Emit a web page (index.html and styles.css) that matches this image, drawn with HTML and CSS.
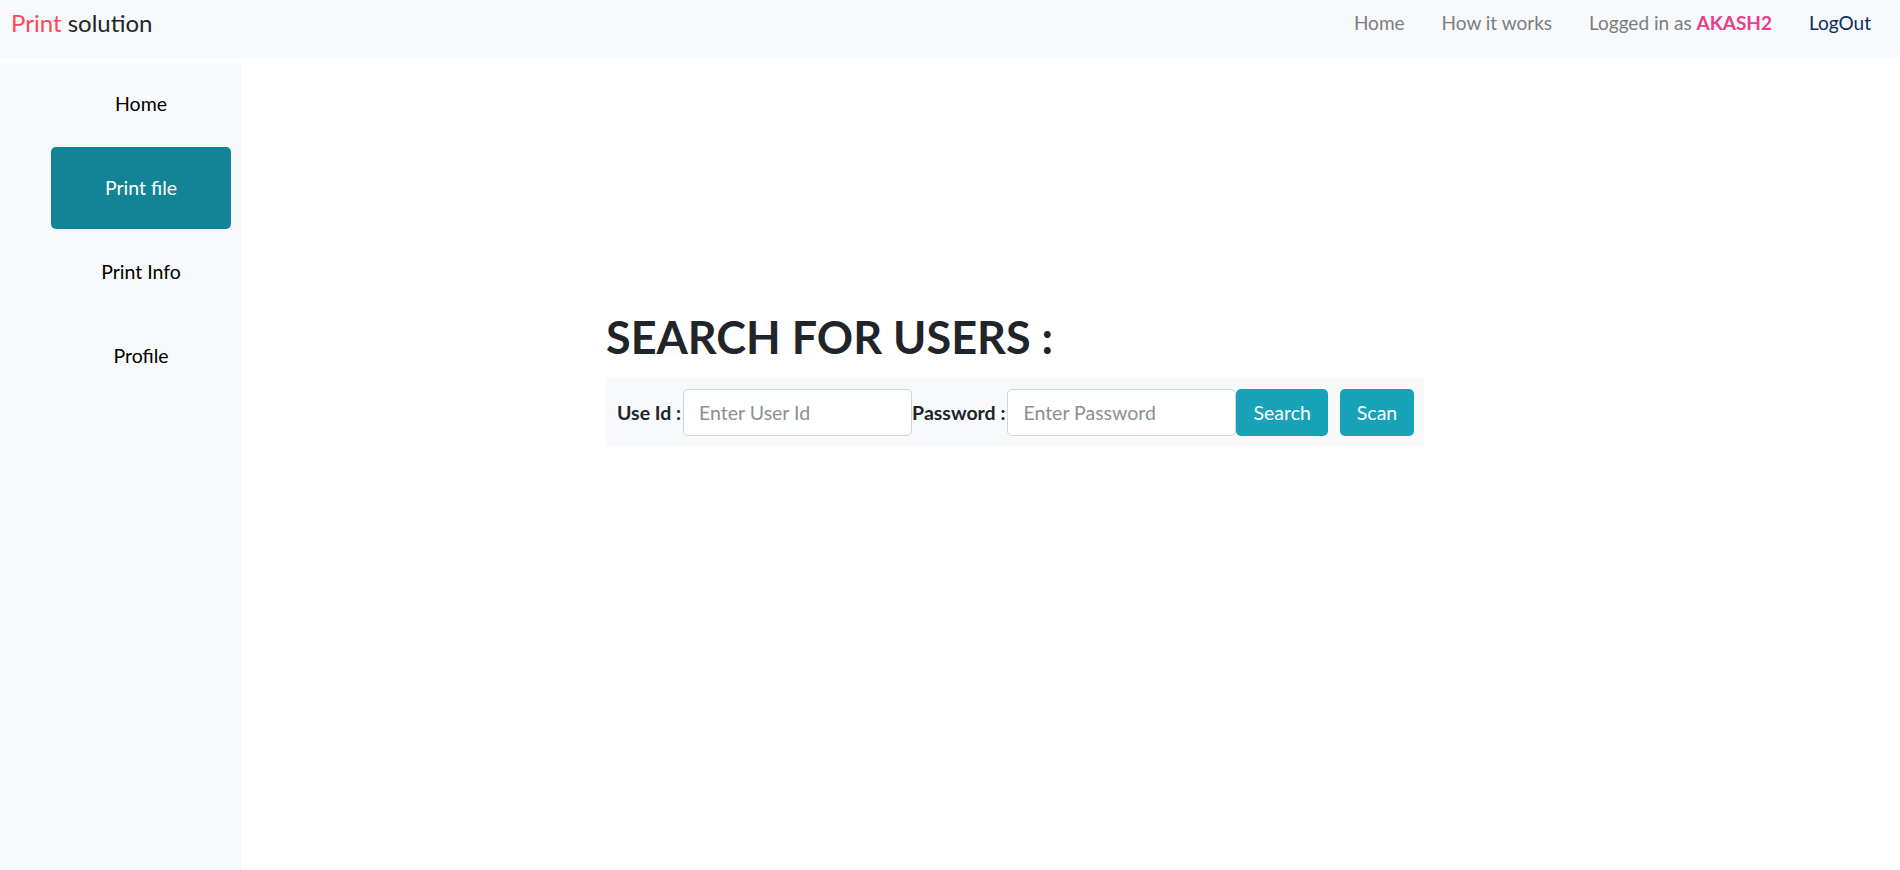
FILE: index.html
```html
<!DOCTYPE html>
<html>
<head>
<meta charset="utf-8">
<title>Print solution</title>
<link rel="stylesheet" href="styles.css">
</head>
<body>
<nav class="topbar">
  <a class="brand"><span class="brand-red">Print</span> solution</a>
  <ul class="nav-links">
    <li><a class="nav-link">Home</a></li>
    <li><a class="nav-link">How it works</a></li>
    <li><span class="nav-link">Logged in as <b class="user">AKASH2</b></span></li>
    <li><a class="nav-link logout">LogOut</a></li>
  </ul>
</nav>
<div class="layout">
  <aside class="sidebar">
    <a class="side-item">Home</a>
    <a class="side-item active">Print file</a>
    <a class="side-item">Print Info</a>
    <a class="side-item">Profile</a>
  </aside>
  <main class="main">
    <section class="search">
      <h1 class="title">SEARCH FOR USERS :</h1>
      <form class="search-bar">
        <label class="lbl">Use Id :</label>
        <input class="field" type="text" placeholder="Enter User Id">
        <label class="lbl">Password :</label>
        <input class="field" type="password" placeholder="Enter Password">
        <button class="btn" type="button">Search</button>
        <button class="btn scan" type="button">Scan</button>
      </form>
    </section>
  </main>
</div>
</body>
</html>
```
FILE: styles.css
```css
* { box-sizing: border-box; }
html, body { margin: 0; padding: 0; height: 100%; }
body {
  font-family: Lato, "Noto Sans", sans-serif;
  color: #212529;
  background: #fff;
  overflow: hidden;
}
.topbar {
  height: 58px;
  background: #f8f9fa;
  display: flex;
  align-items: flex-start;
  justify-content: space-between;
  padding: 8px 29px 0 11px;
}
.brand { font-size: 24px; line-height: 30px; color: #212529; }
.brand-red { color: #ff4757; }
.nav-links {
  list-style: none;
  margin: 0;
  padding: 0;
  display: flex;
  align-items: center;
  gap: 37px;
  height: 30px;
}
.nav-link { font-size: 19px; line-height: 30px; color: #7b7d80; }
.user { color: #e83e8c; font-weight: 700; }
.logout { color: #0b2d5b; }
.layout {
  display: flex;
  margin-top: 5px;
  height: calc(100% - 63px);
}
.sidebar {
  width: 241px;
  background: #f8f9fa;
  display: flex;
  flex-direction: column;
  gap: 2px;
  padding: 0 10px 0 51px;
}
.side-item {
  height: 82px;
  display: flex;
  align-items: center;
  justify-content: center;
  font-size: 19.5px;
  color: #000;
  border-radius: 5px;
  padding-bottom: 2px;
}
.side-item.active { background: #138496; color: #fff; }
.main { flex: 1; padding: 0 0 0 365px; }
.search { padding-top: 247px; }
.title {
  margin: 0 0 14px;
  font-size: 45px;
  font-weight: 700;
  line-height: 54px;
  color: #212529;
}
.search-bar {
  display: inline-flex;
  align-items: center;
  background: #f8f9fa;
  height: 68px;
  padding: 0 10px 0 11px;
}
.lbl { font-size: 19.5px; font-weight: 700; color: #212529; }
.field {
  width: 229px;
  height: 47px;
  border: 1px solid #ced4da;
  border-radius: 5px;
  padding: 0 15px;
  font-family: inherit;
  font-size: 19.5px;
  color: #495057;
  background: #fff;
  margin-left: 2px;
}
.field::placeholder { color: #8a9096; }
.btn {
  height: 47px;
  border: none;
  border-radius: 5px;
  background: #17a2b8;
  color: #fff;
  font-family: inherit;
  font-size: 19.5px;
  padding: 0 17px;
}
.btn.scan { margin-left: 12px; }
```
